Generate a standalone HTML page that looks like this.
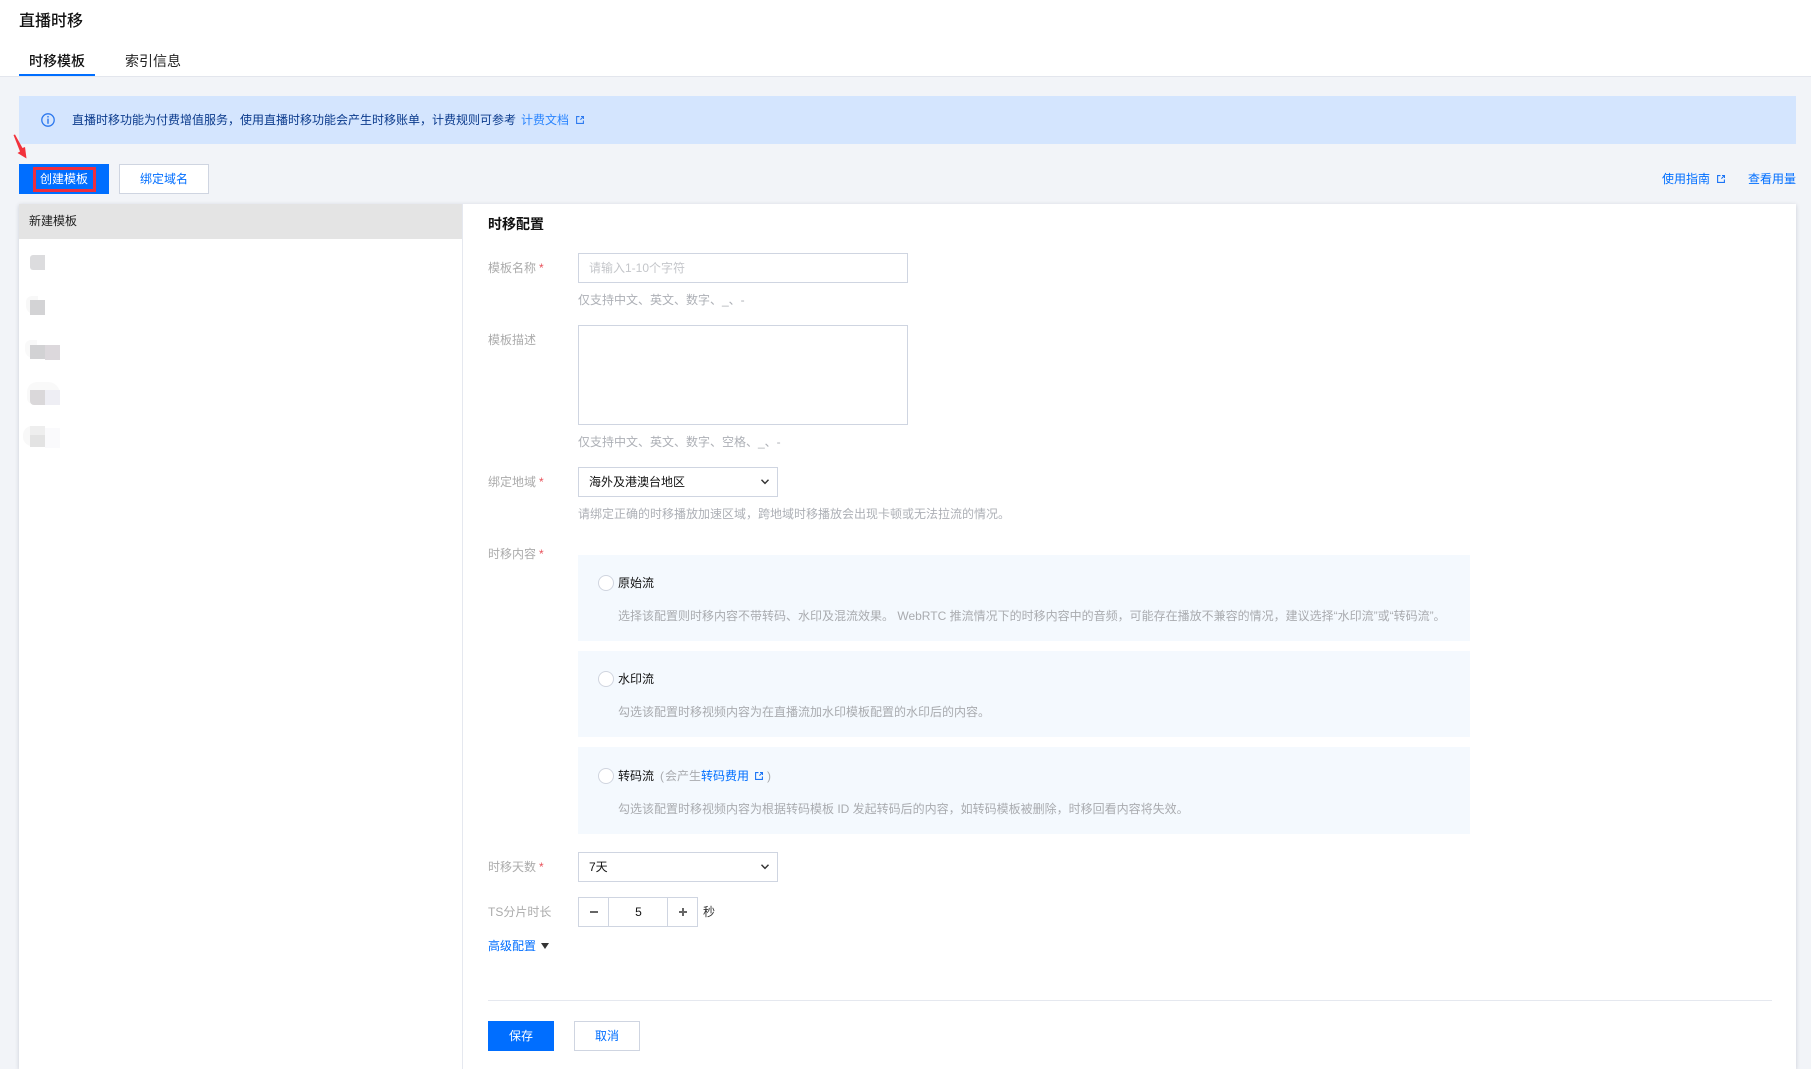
<!DOCTYPE html>
<html lang="zh-CN"><head><meta charset="utf-8"><title>直播时移</title>
<style>
*{box-sizing:border-box;margin:0;padding:0}
html,body{width:1811px;height:1069px;overflow:hidden;background:#f2f4f8;font-family:"Liberation Sans","Noto Sans CJK SC",sans-serif;font-size:12px;color:#111}
.a{position:absolute}
.t{position:absolute;white-space:nowrap;line-height:20px;height:20px}
.lb{color:#ababab;left:488px}
.h{color:#adb0b6;left:578px}
.d{color:#a9abaf;left:618px}
.blue{color:#006eff}
.star{color:#e8525b;margin-left:3px}
.box{position:absolute;background:#fff;border:1px solid #cfd5e1}
.card{position:absolute;left:578px;width:892px;height:86px;background:#f4f9fe}
.radio{position:absolute;left:598px;width:16px;height:16px;border-radius:50%;border:1px solid #d0d5df;background:#fff}
svg{position:absolute;display:block}
</style></head><body>
<div class="a" style="left:0;top:0;width:1811px;height:76px;background:#fff"></div>
<div class="a" style="left:0;top:76px;width:1811px;height:1px;background:#e3e6ed"></div>
<div class="t" style="left:19px;top:12px;font-size:16px;color:#111;font-weight:500">直播时移</div>
<div class="t" style="left:29px;top:51px;font-size:14px;color:#111;font-weight:500">时移模板</div>
<div class="t" style="left:125px;top:51px;font-size:14px;color:#222">索引信息</div>
<div class="a" style="left:19px;top:74px;width:76px;height:2px;background:#006eff"></div>

<div class="a" style="left:19px;top:96px;width:1777px;height:48px;background:#d4e5fe"></div>
<svg style="left:41px;top:113px" width="14" height="14" viewBox="0 0 14 14"><circle cx="7" cy="7" r="6.2" fill="none" stroke="#2c78ee" stroke-width="1.3"/><rect x="6.3" y="3" width="1.4" height="1.5" fill="#2c78ee"/><rect x="6.3" y="5.6" width="1.4" height="5.2" fill="#2c78ee"/></svg>
<div class="t" style="left:72px;top:110px;color:#0a3a8c">直播时移功能为付费增值服务，使用直播时移功能会产生时移账单，计费规则可参考</div>
<div class="t blue" style="left:521px;top:110px;opacity:.8">计费文档</div>
<svg style="left:576px;top:116px" width="8" height="8" viewBox="0 0 8 8"><path d="M3.5.6H.6v6.8h6.8V4.5M4.4 3.6 7.4.6M5 .5h2.5V3" fill="none" stroke="#2f7bf0" stroke-width="1.1"/></svg>

<svg style="left:10px;top:130px" width="22" height="32" viewBox="0 0 22 32"><path d="M3.500 5 5 4.500 12.500 18 15 17 16.500 28.500 7.500 23 10 21.500Z" fill="#f2323c"/></svg>
<div class="a" style="left:19px;top:164px;width:90px;height:30px;background:#006eff"></div>
<div class="t" style="left:40px;top:169px;color:#fff">创建模板</div>
<div class="a" style="left:33px;top:167px;width:63px;height:25px;border:3px solid #ee2e3c"></div>
<div class="box" style="left:119px;top:164px;width:90px;height:30px"></div>
<div class="t blue" style="left:140px;top:169px">绑定域名</div>
<div class="t blue" style="left:1662px;top:169px">使用指南</div>
<svg style="left:1717px;top:175px" width="8" height="8" viewBox="0 0 8 8"><path d="M3.500.6H.6v6.800h6.800V4.500M4.400 3.600 7.400.6M5 .5h2.500V3" fill="none" stroke="#1b74f5" stroke-width="1.100"/></svg>
<div class="t blue" style="left:1748px;top:169px">查看用量</div>

<div class="a" style="left:19px;top:204px;width:1777px;height:865px;background:#fff;box-shadow:0 1px 4px rgba(60,70,90,.22)"></div>
<div class="a" style="left:19px;top:204px;width:443px;height:35px;background:#e4e4e4"></div>
<div class="a" style="left:462px;top:204px;width:1px;height:865px;background:#e5e8ef"></div>
<div class="t" style="left:29px;top:211px;color:#222">新建模板</div>

<div class="a" style="left:30px;top:255px;width:15px;height:15px;background:#dcdcde;border-radius:3px 0 0 3px"></div>
<div class="a" style="left:26px;top:296px;width:12px;height:18px;background:#f8f8f8;border-radius:6px 0 0 8px"></div>
<div class="a" style="left:30px;top:300px;width:15px;height:15px;background:#d3d3d5"></div>
<div class="a" style="left:25px;top:340px;width:12px;height:18px;background:#f9f9f9;border-radius:6px 0 0 8px"></div>
<div class="a" style="left:30px;top:345px;width:15px;height:14px;background:#d2d2d4"></div>
<div class="a" style="left:45px;top:345px;width:15px;height:15px;background:#dcd8dc"></div>
<div class="a" style="left:27px;top:382px;width:33px;height:22px;background:#f9f9f9;border-radius:10px 12px 0 6px"></div>
<div class="a" style="left:30px;top:390px;width:15px;height:15px;background:#dad8da;border-radius:0 0 0 4px"></div>
<div class="a" style="left:45px;top:390px;width:15px;height:15px;background:#eeeef4"></div>
<div class="a" style="left:23px;top:426px;width:10px;height:20px;background:#f8f8f8;border-radius:9px 0 0 9px"></div>
<div class="a" style="left:30px;top:426px;width:15px;height:9px;background:#eeeeee"></div>
<div class="a" style="left:30px;top:435px;width:15px;height:12px;background:#e3e3e3"></div>
<div class="a" style="left:45px;top:428px;width:15px;height:20px;background:#fafafc"></div>

<div class="t" style="left:488px;top:214px;font-size:14px;font-weight:700;color:#111">时移配置</div>

<div class="t lb" style="top:258px">模板名称<span class="star">*</span></div>
<div class="box" style="left:578px;top:253px;width:330px;height:30px"></div>
<div class="t" style="left:589px;top:258px;color:#c4c6ca">请输入1-10个字符</div>
<div class="t h" style="top:290px">仅支持中文、英文、数字、_、-</div>

<div class="t lb" style="top:330px">模板描述</div>
<div class="box" style="left:578px;top:325px;width:330px;height:100px"></div>
<div class="t h" style="top:432px">仅支持中文、英文、数字、空格、_、-</div>

<div class="t lb" style="top:472px">绑定地域<span class="star">*</span></div>
<div class="box" style="left:578px;top:467px;width:200px;height:30px"></div>
<div class="t" style="left:589px;top:472px">海外及港澳台地区</div>
<svg style="left:760px;top:478px" width="10" height="8" viewBox="0 0 10 8"><path d="M1.500 1.800 5 5.400 8.500 1.800" fill="none" stroke="#333" stroke-width="1.400"/></svg>
<div class="t h" style="top:504px">请绑定正确的时移播放加速区域，跨地域时移播放会出现卡顿或无法拉流的情况。</div>

<div class="t lb" style="top:544px">时移内容<span class="star">*</span></div>
<div class="card" style="top:555px"></div>
<div class="radio" style="top:575px"></div>
<div class="t" style="left:618px;top:573px">原始流</div>
<div class="t d" style="top:606px">选择该配置则时移内容不带转码、水印及混流效果。 WebRTC 推流情况下的时移内容中的音频，可能存在播放不兼容的情况，建议选择“水印流”或“转码流”。</div>
<div class="card" style="top:651px"></div>
<div class="radio" style="top:671px"></div>
<div class="t" style="left:618px;top:669px">水印流</div>
<div class="t d" style="top:702px">勾选该配置时移视频内容为在直播流加水印模板配置的水印后的内容。</div>
<div class="card" style="top:747px;height:87px"></div>
<div class="radio" style="top:768px"></div>
<div class="t" style="left:618px;top:766px">转码流</div>
<div class="t" style="left:660px;top:766px;color:#a9abaf">(</div>
<div class="t" style="left:665px;top:766px;color:#a9abaf">会产生</div>
<div class="t blue" style="left:701px;top:766px">转码费用</div>
<svg style="left:755px;top:772px" width="8" height="8" viewBox="0 0 8 8"><path d="M3.500.6H.6v6.800h6.800V4.500M4.400 3.600 7.400.6M5 .5h2.500V3" fill="none" stroke="#1b74f5" stroke-width="1.100"/></svg>
<div class="t" style="left:767px;top:766px;color:#a9abaf">)</div>
<div class="t d" style="top:799px">勾选该配置时移视频内容为根据转码模板 ID 发起转码后的内容，如转码模板被删除，时移回看内容将失效。</div>

<div class="t lb" style="top:857px">时移天数<span class="star">*</span></div>
<div class="box" style="left:578px;top:852px;width:200px;height:30px"></div>
<div class="t" style="left:589px;top:857px">7天</div>
<svg style="left:760px;top:863px" width="10" height="8" viewBox="0 0 10 8"><path d="M1.500 1.800 5 5.400 8.500 1.800" fill="none" stroke="#333" stroke-width="1.400"/></svg>

<div class="t lb" style="top:902px">TS分片时长</div>
<div class="box" style="left:578px;top:897px;width:120px;height:30px"></div>
<div class="a" style="left:608px;top:897px;width:1px;height:30px;background:#cfd5e1"></div>
<div class="a" style="left:667px;top:897px;width:1px;height:30px;background:#cfd5e1"></div>
<div class="a" style="left:590px;top:911px;width:8px;height:2px;background:#666"></div>
<div class="a" style="left:679px;top:911px;width:8px;height:2px;background:#666"></div>
<div class="a" style="left:682px;top:908px;width:2px;height:8px;background:#666"></div>
<div class="t" style="left:609px;width:59px;text-align:center;top:902px">5</div>
<div class="t" style="left:703px;top:902px;color:#333">秒</div>

<div class="t blue" style="left:488px;top:936px">高级配置</div>
<svg style="left:541px;top:943px" width="8" height="6" viewBox="0 0 8 6"><path d="M0 0H8L4 6Z" fill="#333"/></svg>

<div class="a" style="left:488px;top:1000px;width:1284px;height:1px;background:#e5e8ef"></div>
<div class="a" style="left:488px;top:1021px;width:66px;height:30px;background:#006eff"></div>
<div class="t" style="left:488px;width:66px;text-align:center;top:1026px;color:#fff">保存</div>
<div class="box" style="left:574px;top:1021px;width:66px;height:30px"></div>
<div class="t blue" style="left:574px;width:66px;text-align:center;top:1026px">取消</div>
</body></html>
